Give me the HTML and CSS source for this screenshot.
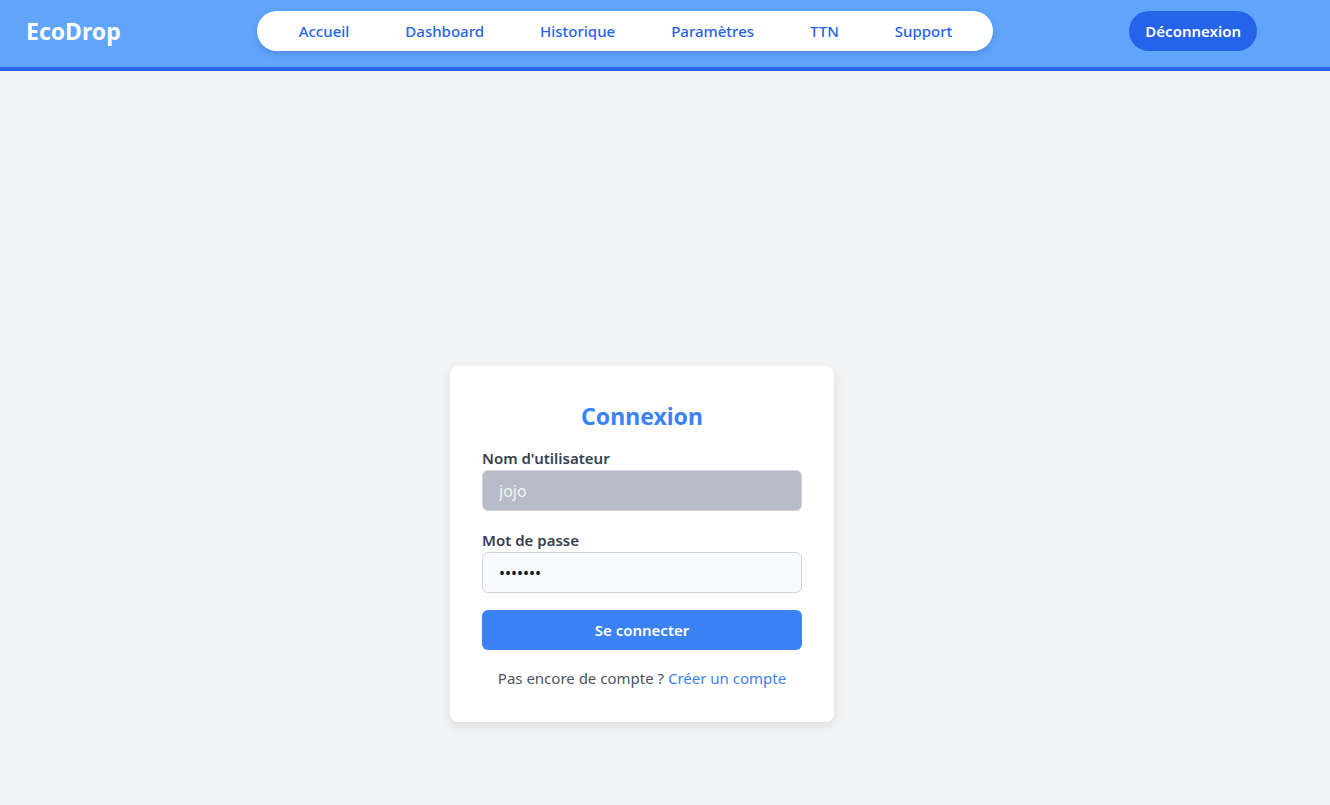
FILE: index.html
```html
<!DOCTYPE html>
<html lang="fr">
<head>
<meta charset="utf-8">
<title>EcoDrop - Connexion</title>
<link rel="stylesheet" href="styles.css">
</head>
<body>
<header class="topbar">
  <div class="logo">EcoDrop</div>
  <nav class="nav">
    <a class="nav-link" href="#">Accueil</a>
    <a class="nav-link" href="#">Dashboard</a>
    <a class="nav-link" href="#">Historique</a>
    <a class="nav-link" href="#">Paramètres</a>
    <a class="nav-link" href="#">TTN</a>
    <a class="nav-link" href="#">Support</a>
  </nav>
  <button class="logout">Déconnexion</button>
</header>
<main class="main">
  <form class="card">
    <h2 class="card-title">Connexion</h2>
    <label class="label" for="user">Nom d'utilisateur</label>
    <input class="input input-disabled" id="user" type="text" value="jojo" disabled>
    <label class="label label-second" for="pass">Mot de passe</label>
    <input class="input" id="pass" type="password" value="jojojoj">
    <button class="submit" type="button">Se connecter</button>
    <p class="signup">Pas encore de compte ? <a class="signup-link" href="#">Créer un compte</a></p>
  </form>
</main>
</body>
</html>
```
FILE: styles.css
```css
* { box-sizing: border-box; }
html, body { margin: 0; padding: 0; }
body {
  background: #f3f4f6;
  font-family: "Noto Sans", "Open Sans", sans-serif;
  color: #374151;
  height: 805px;
  overflow: hidden;
}
.topbar {
  height: 71px;
  background: #60a5fa;
  border-bottom: 4px solid #2563eb;
  display: flex;
  align-items: center;
  justify-content: space-between;
  padding: 0 73px 5px 26px;
}
.logo {
  color: #fff;
  font-weight: 700;
  font-size: 23px;
  line-height: 32px;
}
.nav {
  background: #fff;
  height: 40px;
  border-radius: 20px;
  display: flex;
  align-items: center;
  padding: 0 13px 0 14px;
  box-shadow: 0 3px 6px rgba(30, 64, 175, 0.25);
}
.nav-link {
  color: #2563eb;
  text-decoration: none;
  font-size: 15px;
  font-weight: 500;
  padding: 0 28px;
}
.logout {
  background: #2563eb;
  color: #fff;
  border: none;
  height: 40px;
  border-radius: 20px;
  padding: 0 16px;
  font-family: inherit;
  font-size: 15px;
  font-weight: 600;
}
.main {
  padding: 295px 0 0 450px;
}
.card {
  width: 384px;
  background: #fff;
  border-radius: 8px;
  padding: 32px;
  box-shadow: 0 4px 12px rgba(0, 0, 0, 0.1);
  display: flex;
  flex-direction: column;
}
.card-title {
  margin: 2px 0 16px;
  text-align: center;
  color: #3b82f6;
  font-size: 23px;
  line-height: 32px;
  font-weight: 700;
}
.label {
  display: block;
  font-size: 15px;
  font-weight: 600;
  line-height: 20px;
  margin-bottom: 2px;
  color: #374151;
}
.label-second { margin-top: 19px; }
.input {
  width: 320px;
  height: 41px;
  border: 1px solid #d1d5db;
  border-radius: 6px;
  padding: 0 16px;
  font-family: inherit;
  font-size: 16px;
  background: #f9fafb;
  color: #111827;
}
.input-disabled {
  background: #b6bcc8;
  color: #f3f4f6;
}
.submit {
  margin-top: 17px;
  height: 40px;
  border: none;
  border-radius: 6px;
  background: #3b82f6;
  color: #fff;
  font-family: inherit;
  font-size: 15px;
  font-weight: 600;
}
.signup {
  margin: 16px 0 0;
  text-align: center;
  font-size: 15px;
  line-height: 24px;
  color: #4b5563;
}
.signup-link {
  color: #3b82f6;
  text-decoration: none;
}
```
